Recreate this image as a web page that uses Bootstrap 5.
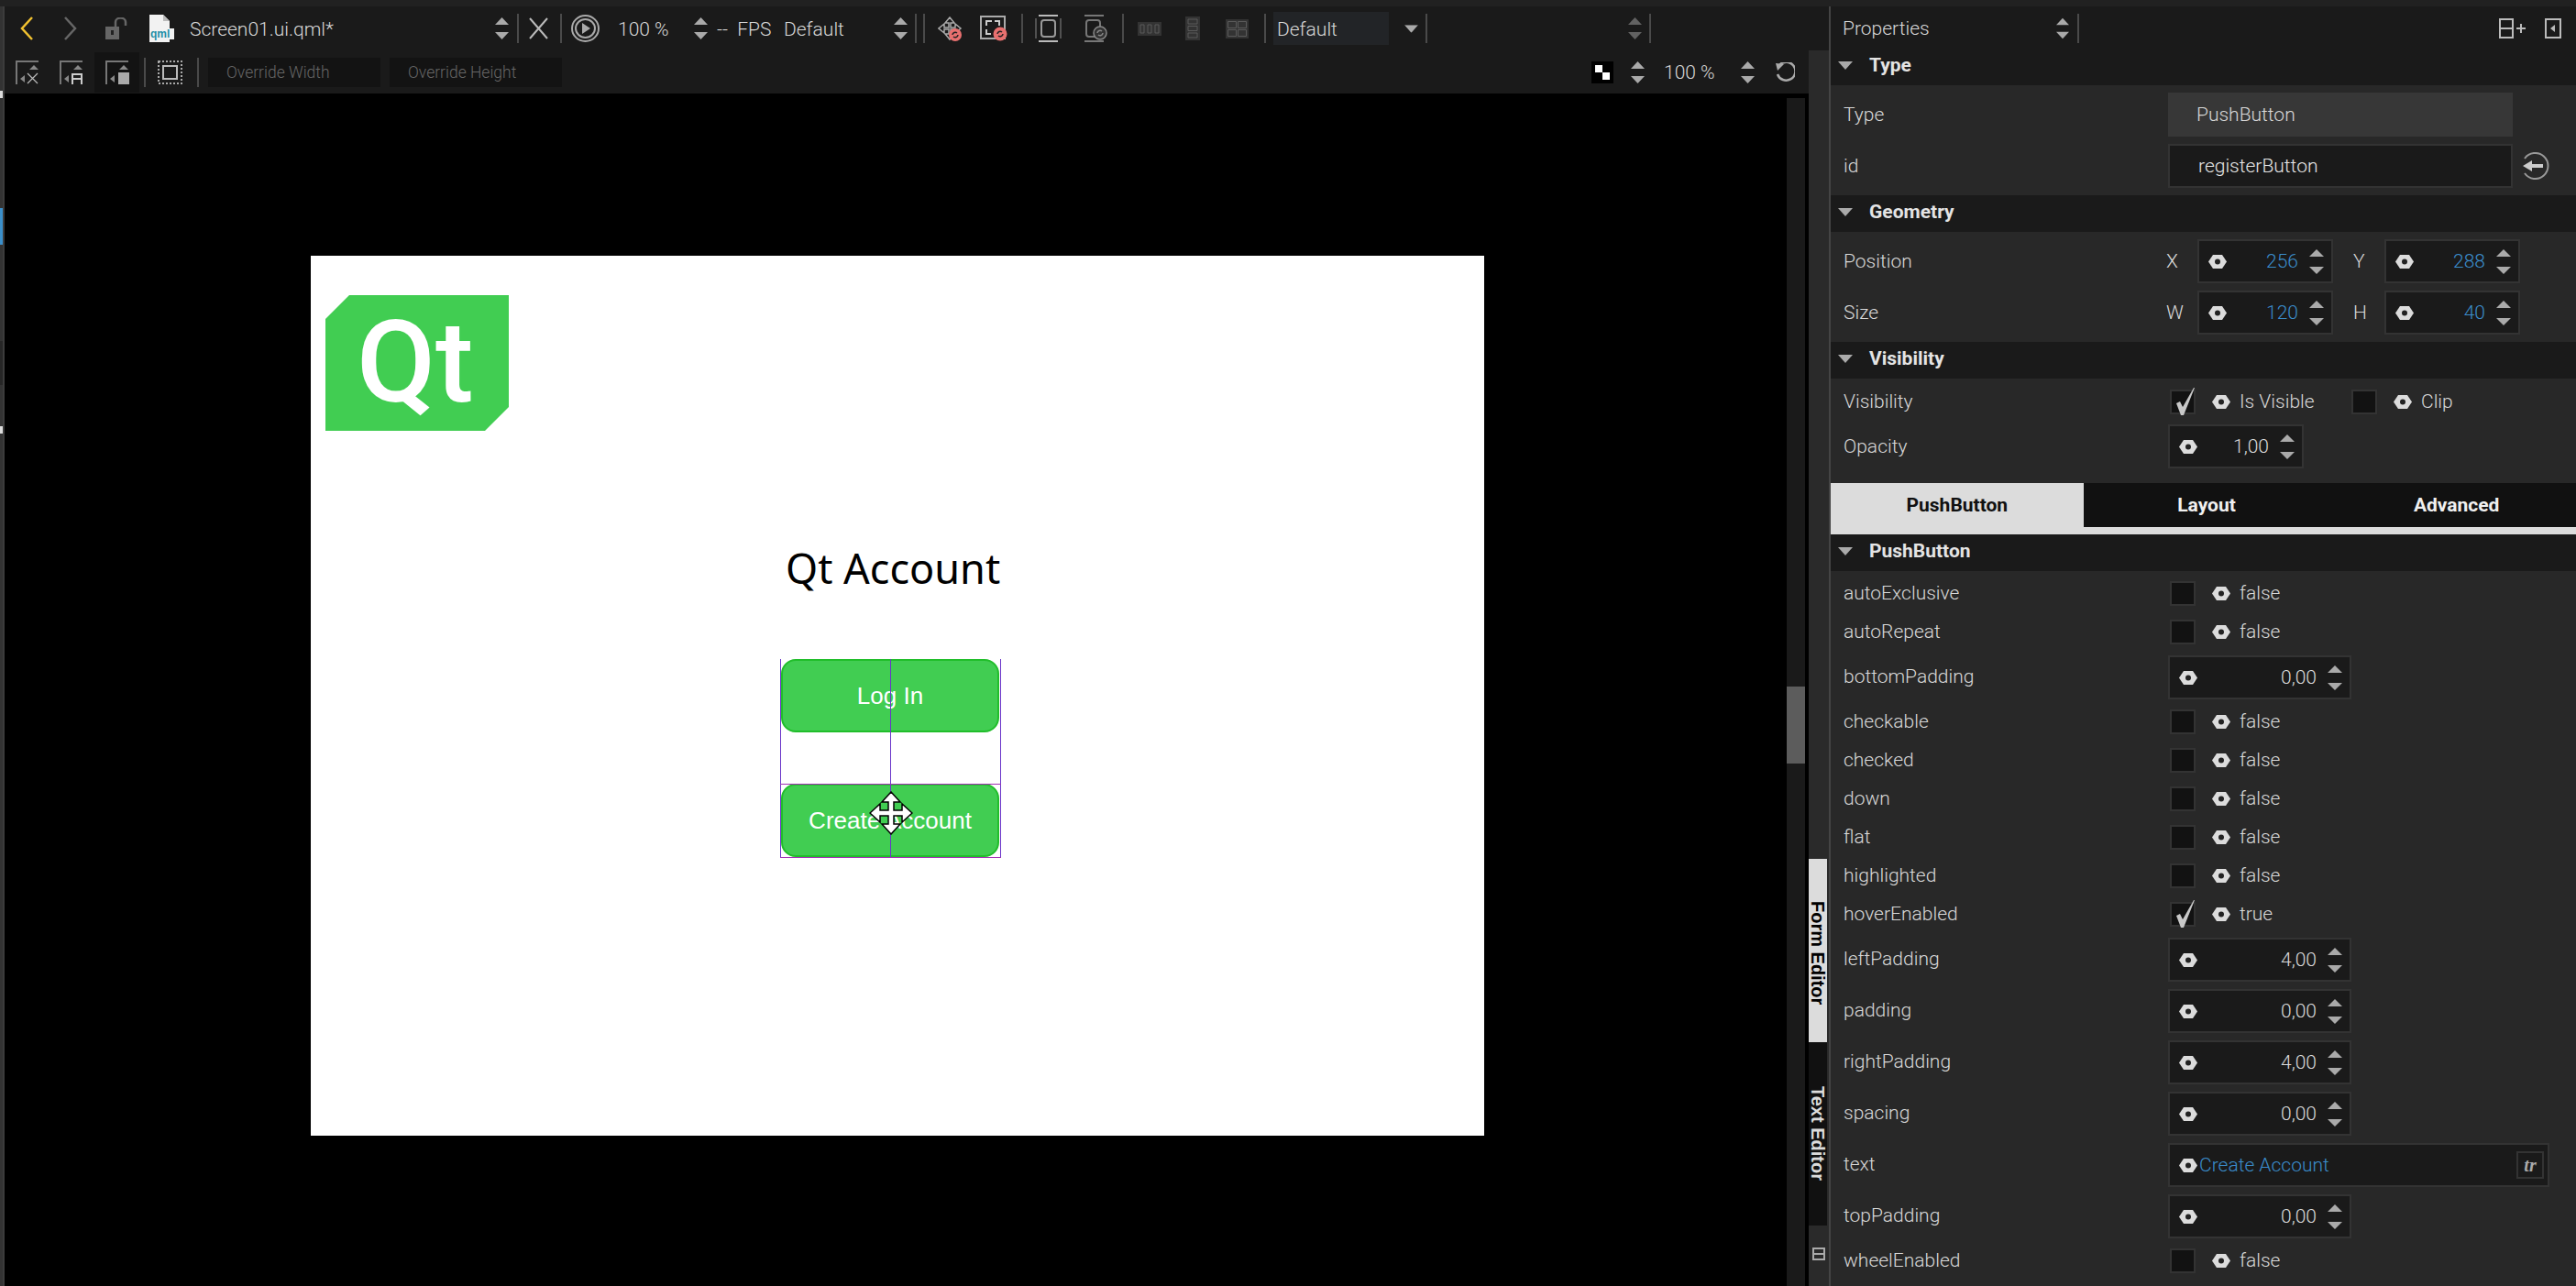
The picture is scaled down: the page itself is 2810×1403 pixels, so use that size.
<!DOCTYPE html>
<html lang="en">
<head>
  <meta charset="UTF-8" />
  <title>Qt Design Studio - Screen01.ui.qml</title>
  <link href="https://cdn.jsdelivr.net/npm/bootstrap@5.3.2/dist/css/bootstrap.min.css" rel="stylesheet" />
  <style>
    html, body { height: 1403px; overflow: hidden; }
    body {
      width: 2810px;
      background-color: #000;
      color: #d8d8d8;
      font-family: Roboto, "Liberation Sans", sans-serif;
      font-weight: 300;
      font-size: 21px;
      line-height: 1;
    }
    svg { display: block; flex: none; }
    .top-strip { height: 7px; background: #212121; }
    .shell { height: 1396px; }

    /* left rail */
    .rail { width: 5px; background: #333; border-right: 2px solid #3c3c3c; }
    .rail-mark { width: 3px; margin-left: 0; }
    .mark-a { height: 8px; margin-top: 92px; background: #dcdcdc; }
    .mark-b { height: 40px; margin-top: 120px; background: #3b8fca; }
    .mark-c { height: 48px; margin-top: 105px; background: #262626; }
    .mark-d { height: 8px; margin-top: 45px; background: #dcdcdc; }

    /* toolbars */
    .main-col { width: 1991px; }
    .tool-row { height: 48px; background: #1a1a1a; }
    .tool-row2 { height: 47px; background: #1a1a1a; }
    .tool-sep { width: 2px; height: 32px; background: #4a4a4a; flex: none; }
    .tool-sel { width: 49px; height: 44px; background: #131313; }
    .tool-input { width: 188px; height: 32px; background: #131313; color: #666; font-size: 17.5px; padding: 2px 0 0 20px; }
    .txt-file { width: 333px; padding-top: 2px; }
    .txt-zoom { width: 83px; padding-top: 2px; }
    .txt-fps { width: 73px; padding-top: 2px; word-spacing: 5px; }
    .txt-def { width: 120px; padding-top: 2px; }
    .tool-zoom { width: 73px; padding-top: 2px; }
    .combo-box { width: 126px; height: 36px; background: #222427; padding: 2px 0 0 4px; }
    .t7 { margin-left: 7px; } .t8 { margin-left: 8px; } .t9 { margin-left: 9px; }
    .t10 { margin-left: 10px; } .t11 { margin-left: 11px; } .t12 { margin-left: 12px; }
    .t13 { margin-left: 13px; } .t14 { margin-left: 14px; } .t15 { margin-left: 15px; }
    .t16 { margin-left: 16px; } .t17 { margin-left: 17px; } .t19 { margin-left: 19px; }
    .t20 { margin-left: 20px; } .t21 { margin-left: 21px; } .t22 { margin-left: 22px; }
    .t24 { margin-left: 24px; } .t26 { margin-left: 26px; } .t28 { margin-left: 28px; }
    .t31 { margin-left: 31px; } .t33 { margin-left: 33px; } .t219 { margin-left: 219px; }
    .t5 { margin-left: 5px; }
    .right-group { padding-right: 15px; }

    /* canvas */
    .stage { width: 1944px; padding: 177px 0 0 334px; }
    .scene { position: relative; width: 1280px; height: 960px; background: #fff; }
    .qt-logo {
      position: absolute; left: 16px; top: 43px; width: 200px; height: 148px;
      background: #41cd52; color: #fff; padding-left: 34px;
      clip-path: polygon(26px 0, 100% 0, 100% 122px, 174px 100%, 0 100%, 0 26px);
      font-family: Roboto, sans-serif; font-weight: 500; font-size: 125px; line-height: 148px;
      filter: blur(.5px);
    }
    .scene-title {
      position: absolute; left: 518px; top: 311px;
      color: #000; font-family: "Noto Sans", sans-serif; font-weight: 400; font-size: 45px; line-height: 60px;
      white-space: nowrap;
    }
    .scene-btn {
      position: absolute; left: 513px; width: 238px; height: 80px;
      background: #41cd52; border: 2px solid #21be2b; border-radius: 16px; color: #fff;
      font-family: "Liberation Sans", sans-serif; font-weight: 400; font-size: 26px; padding: 0;
    }
    .scene-btn:hover { background: #41cd52; border-color: #21be2b; color: #fff; }
    .btn-login { top: 440px; }
    .btn-create { top: 576px; }
    .sel-v { position: absolute; top: 440px; width: 1px; height: 217px; background: #6a35c9; }
    .sel-h { position: absolute; left: 512px; width: 241px; height: 1px; background: #a331b4; }
    .sel-l { left: 512px; } .sel-c { left: 632px; } .sel-r { left: 752px; }
    .sel-m { top: 576px; } .sel-b { top: 656px; }
    .move-cursor { position: absolute; left: 609px; top: 584px; }

    /* scrollbar and side tabs */
    .v-scroll { width: 20px; margin-top: 5px; background: #1a1a1a; padding-top: 642px; }
    .v-thumb { height: 84px; background: #5c5c5c; }
    .gap-col { width: 4px; }
    .side-tabs { width: 22px; background: #2a2a2a; }
    .side-tab {
      writing-mode: vertical-rl; font-family: "Liberation Sans", sans-serif; font-weight: 700; font-size: 20px;
      padding-top: 46px;
    }
    .tab-form { height: 200px; background: #dcdcdc; color: #000; margin-top: 882px; }
    .tab-text { height: 200px; background: #111; color: #dcdcdc; padding-top: 48px; }
    .side-foot { padding: 24px 0 0 4px; }

    /* properties panel */
    .panel { width: 815px; border-left: 2px solid #444; background: #282828; }
    .panel-head { height: 48px; background: #1a1a1a; padding-left: 13px; }
    .panel-title { width: 233px; }
    .sec-head { height: 40px; background: #1a1a1a; padding: 0 0 3px 8px; color: #e4e4e4; font-weight: 700; }
    .sec-first { height: 38px; padding-bottom: 5px; }
    .sec-name { margin-left: 18px; }
    .sec-body { padding: 4px 0; }
    .sec-vis { padding: 4px 0 12px; }
    .sec-list { padding-top: 3px; }
    .prop-row { height: 56px; padding-left: 14px; }
    .prop-check { height: 42px; }
    .prop-label { width: 354px; flex: none; }
    .xy-main { width: 352px; }
    .xy-label { width: 34px; flex: none; }
    .xy-second { width: 34px; margin-left: 22px; flex: none; }
    .field { height: 48px; border: 2px solid #333; background: #1a1a1a; flex: none; margin-top: 2px; }
    .field-type { width: 376px; background: #373737; border: 0; padding-left: 31px; margin-top: 0; }
    .field-id { width: 376px; padding-left: 31px; margin-top: 0; color: #e6e6e6; }
    .back-icon { margin-left: 9px; }
    .spin-md { width: 200px; }
    .spin-xy { margin-top: 0; width: 148px; }
    .spin-op { margin-top: 0; width: 148px; }
    .field-text { width: 416px; }
    .spin-hex { margin-left: 10px; }
    .spin-val { flex: 1; text-align: right; margin-right: 12px; color: #dcdcdc; }
    .val-blue { color: #3a8ccb; }
    .spin-arrows { margin-right: 8px; }
    .chk-box {
      width: 28px; height: 27px; margin-left: 2px; background: #121212; border: 2px solid #333; flex: none;
      position: relative;
    }
    .chk-mark { position: absolute; left: 4px; top: -4px; }
    .chk-hex { margin-left: 18px; }
    .chk-text { margin-left: 10px; white-space: nowrap; }
    .vis-first { width: 198px; }
    .text-val { color: #3a8ccb; margin-left: 2px; flex: 1; }
    .tr-btn {
      width: 30px; height: 30px; border: 2px solid #333; margin-right: 4px; color: #aaa;
      font-family: "Liberation Serif", serif; font-weight: 700; font-style: italic; font-size: 20px;
    }
    .tab-strip { height: 56px; background: #111; border-bottom: 8px solid #dcdcdc; font-weight: 700; color: #f0f0f0; }
    .tab-item { width: 269px; }
    .tab-on { width: 276px; background: #dcdcdc; color: #111; }
    .tab-last { padding-left: 8px; }
  </style>
</head>
<body>
  <svg width="0" height="0" class="position-absolute">
    <symbol id="updown" viewBox="0 0 16 27"><path d="M8 0l8 8H0zM0 19h16l-8 8z" fill="#aaa"/></symbol>
    <symbol id="updown-tool" viewBox="0 0 15 24"><path d="M7.500 0L15 8H0zM0 16h15l-7.500 8z" fill="#aaa"/></symbol>
    <symbol id="hex" viewBox="0 0 20 15"><path d="M5 0h10l5 7.500L15 15H5L0 7.500z" fill="#dcdcdc"/><circle cx="10" cy="7.500" r="3" fill="#222"/></symbol>
    <symbol id="section-tri" viewBox="0 0 16 9"><path d="M0 0h16L8 9z" fill="#aaa"/></symbol>
    <symbol id="tick" viewBox="0 0 22 30"><path d="M1 17l4-2 3 6L20 0h1L9 30H6z" fill="#c8c8c8"/></symbol>
  </svg>

  <div class="top-strip"></div>
  <div class="shell d-flex">
    <div class="rail d-flex flex-column">
      <div class="rail-mark mark-a"></div>
      <div class="rail-mark mark-b"></div>
      <div class="rail-mark mark-c"></div>
      <div class="rail-mark mark-d"></div>
    </div>

    <div class="main-col d-flex flex-column">
      <!-- toolbar 1 -->
      <div class="tool-row d-flex align-items-center">
        <svg class="t17" width="14" height="26" viewBox="0 0 14 26"><path d="M13 1L2 13l11 12" fill="none" stroke="#f2c230" stroke-width="2.500"/></svg>
        <svg class="t33" width="15" height="26" viewBox="0 0 15 26"><path d="M2 1l11 12L2 25" fill="none" stroke="#666" stroke-width="2.500"/></svg>
        <svg class="t31" width="24" height="24" viewBox="0 0 24 24"><rect x="0" y="10" width="15" height="14" fill="#666"/><path d="M11 10V5a5 4 0 0 1 11 0v4" fill="none" stroke="#666" stroke-width="2.500"/><rect x="6" y="14" width="3" height="5" fill="#222"/></svg>
        <svg class="t24" width="27" height="30" viewBox="0 0 27 30"><path d="M0 0h15l7 7v23H0z" fill="#f2f2f2"/><path d="M15 0v7h7" fill="#bbb"/><rect x="1" y="15" width="26" height="12" fill="#f2f2f2"/><text x="1" y="25" font-family="Liberation Sans" font-weight="700" font-size="12" fill="#1f8fa8">qml</text></svg>
        <div class="t17 txt-file">Screen01.ui.qml*</div>
        <svg width="15" height="24"><use href="#updown-tool"/></svg>
        <div class="tool-sep t9"></div>
        <svg class="t11" width="21" height="24" viewBox="0 0 21 24"><path d="M1 1l19 22M20 1L1 23" stroke="#bbb" stroke-width="2" fill="none"/></svg>
        <div class="tool-sep t13"></div>
        <svg class="t10" width="31" height="30" viewBox="0 0 31 30"><ellipse cx="15.500" cy="15" rx="14.500" ry="14" fill="none" stroke="#aaa" stroke-width="2"/><ellipse cx="15.500" cy="15" rx="10.500" ry="10" fill="none" stroke="#aaa" stroke-width="2"/><path d="M12 9l9 6-9 6z" fill="#aaa"/></svg>
        <div class="t20 txt-zoom">100 %</div>
        <svg width="15" height="24"><use href="#updown-tool"/></svg>
        <div class="t10 txt-fps">-- FPS</div>
        <div class="txt-def">Default</div>
        <svg width="15" height="24"><use href="#updown-tool"/></svg>
        <div class="tool-sep t8"></div>
        <div class="tool-sep t7"></div>
        <svg class="t14" width="27" height="27" viewBox="0 0 27 27"><path d="M13 1l5 6h-4v5h5V8l6 5-6 5v-4h-5v5h4l-5 6-5-6h4v-5H7v4l-6-5 6-5v4h5V7H8z" fill="none" stroke="#aaa" stroke-width="1.500"/><circle cx="19" cy="20" r="7" fill="#e8706f"/><path d="M16 20a3 3 0 0 1 5-2M22 20a3 3 0 0 1-5 2" stroke="#222" stroke-width="1.500" fill="none"/></svg>
        <svg class="t19" width="30" height="28" viewBox="0 0 30 28"><rect x="1" y="1" width="26" height="24" fill="none" stroke="#aaa" stroke-width="2"/><path d="M7 11V6h6M21 11V6h-5M7 15v5h5" stroke="#ccc" stroke-width="2" fill="none"/><circle cx="22" cy="20" r="7.500" fill="#e8706f"/><path d="M19 20a3 3 0 0 1 5-2M25 20a3 3 0 0 1-5 2" stroke="#222" stroke-width="1.500" fill="none"/></svg>
        <div class="tool-sep t15"></div>
        <svg class="t13" width="29" height="30" viewBox="0 0 29 30"><rect x="4" y="0" width="21" height="2" fill="#bbb"/><rect x="4" y="28" width="21" height="2" fill="#bbb"/><path d="M1 4v22M28 4v22" stroke="#888" stroke-width="1"/><rect x="7" y="6" width="15" height="18" rx="3" fill="none" stroke="#999" stroke-width="2"/></svg>
        <svg class="t21" width="29" height="30" viewBox="0 0 29 30"><rect x="4" y="0" width="21" height="2" fill="#777"/><rect x="4" y="28" width="21" height="2" fill="#777"/><rect x="6" y="6" width="15" height="18" rx="3" fill="none" stroke="#777" stroke-width="2"/><circle cx="21" cy="20" r="7" fill="#333" stroke="#888" stroke-width="1.500"/><path d="M18 20a3 3 0 0 1 5-2M24 20a3 3 0 0 1-5 2" stroke="#888" stroke-width="1.500" fill="none"/></svg>
        <div class="tool-sep t16"></div>
        <svg class="t15" width="26" height="15" viewBox="0 0 26 15"><rect width="26" height="15" fill="#333"/><path d="M3 3h4v9H3zM11 3h4v9h-4zM19 3h4v9h-4z" fill="none" stroke="#5a5a5a"/></svg>
        <svg class="t26" width="16" height="26" viewBox="0 0 16 26"><rect width="16" height="26" fill="#333"/><path d="M3 3h10v5H3zM3 10.500h10v5H3zM3 18h10v5H3z" fill="none" stroke="#5a5a5a"/></svg>
        <svg class="t28" width="25" height="21" viewBox="0 0 25 21"><rect width="25" height="21" fill="#333"/><path d="M2.500 2.500h9v7h-9zM13.500 2.500h9v7h-9zM2.500 11.500h9v7h-9zM13.500 11.500h9v7h-9z" fill="none" stroke="#5a5a5a"/></svg>
        <div class="tool-sep t17"></div>
        <div class="combo-box t8 d-flex align-items-center">Default</div>
        <svg class="t17" width="15" height="9" viewBox="0 0 16 9"><use href="#section-tri"/></svg>
        <div class="tool-sep t8"></div>
        <svg class="t219 opacity-50" width="15" height="24"><use href="#updown-tool"/></svg>
        <div class="tool-sep t8"></div>
      </div>

      <div class="d-flex flex-grow-1">
        <div class="d-flex flex-column flex-grow-1">
          <!-- toolbar 2 -->
          <div class="tool-row2 d-flex align-items-center">
            <svg class="t12" width="26" height="26" viewBox="0 0 26 26"><path d="M1 26V1h24" fill="none" stroke="#777" stroke-width="2"/><path d="M20 5l5 5H15zM5 20l5-4v8z" fill="#888"/><path d="M13 14l11 11M24 14L13 25" stroke="#bbb" stroke-width="1.200"/></svg>
            <svg class="t22" width="26" height="26" viewBox="0 0 26 26"><path d="M1 26V1h24" fill="none" stroke="#777" stroke-width="2"/><path d="M20 5l5 5H15zM5 20l5-4v8z" fill="#888"/><path d="M14 26V15h10v11M14 20h10" stroke="#ccc" stroke-width="2" fill="none"/></svg>
            <div class="tool-sel t12 d-flex align-items-center justify-content-center">
              <svg width="26" height="26" viewBox="0 0 26 26"><path d="M1 26V1h24" fill="none" stroke="#777" stroke-width="2"/><path d="M20 5l5 5H15zM5 20l5-4v8z" fill="#888"/><rect x="14" y="13" width="12" height="13" fill="#aaa"/></svg>
            </div>
            <div class="tool-sep t5"></div>
            <svg class="t13" width="27" height="26" viewBox="0 0 27 26"><rect x="1" y="1" width="25" height="24" fill="none" stroke="#aaa" stroke-width="2" stroke-dasharray="2 2"/><rect x="6" y="6" width="15" height="14" fill="none" stroke="#bbb" stroke-width="2"/></svg>
            <div class="tool-sep t16"></div>
            <div class="tool-input t10 d-flex align-items-center">Override Width</div>
            <div class="tool-input t10 d-flex align-items-center">Override Height</div>
            <div class="right-group ms-auto d-flex align-items-center">
              <svg width="24" height="24" viewBox="0 0 24 24"><rect width="24" height="24" fill="#000"/><rect x="4" y="4" width="8" height="8" fill="#fff"/><rect x="12" y="12" width="8" height="8" fill="#fff"/></svg>
              <svg class="t19" width="15" height="24"><use href="#updown-tool"/></svg>
              <div class="t21 tool-zoom">100 %</div>
              <svg class="t11" width="15" height="24"><use href="#updown-tool"/></svg>
              <svg class="t22" width="22" height="22" viewBox="0 0 22 22"><path d="M4 4a10 10 0 1 1-2 10" transform="translate(1 -1)" fill="none" stroke="#aaa" stroke-width="2.500" /><path d="M1 1l9 1-7 7z" fill="#aaa"/></svg>
            </div>
          </div>

          <div class="d-flex flex-grow-1">
            <!-- form canvas -->
            <div class="stage">
              <div class="scene">
                <div class="qt-logo">Qt</div>
                <div class="scene-title">Qt Account</div>
                <button class="btn scene-btn btn-login">Log In</button>
                <button class="btn scene-btn btn-create">Create Account</button>
                <div class="sel-v sel-l"></div>
                <div class="sel-v sel-c"></div>
                <div class="sel-v sel-r"></div>
                <div class="sel-h sel-m"></div>
                <div class="sel-h sel-b"></div>
                <svg class="move-cursor" width="48" height="48" viewBox="0 0 48 48"><path d="M24 1l10 11h-7v9h9v-7l11 10-11 10v-7h-9v9h7L24 47 14 36h7v-9h-9v7L1 24l11-10v7h9v-9h-7z" fill="#fff" stroke="#000" stroke-width="1.500"/></svg>
              </div>
            </div>
            <div class="v-scroll"><div class="v-thumb"></div></div>
            <div class="gap-col"></div>
          </div>
        </div>

        <div class="side-tabs">
          <div class="side-tab tab-form">Form Editor</div>
          <div class="side-tab tab-text">Text Editor</div>
          <div class="side-foot">
            <svg width="14" height="14" viewBox="0 0 14 14"><rect x="1" y="1" width="12" height="12" fill="none" stroke="#aaa" stroke-width="2"/><path d="M1 7h12" stroke="#aaa" stroke-width="2"/></svg>
          </div>
        </div>
      </div>
    </div>

    <!-- properties -->
    <div class="panel">
      <div class="panel-head d-flex align-items-center">
        <div class="panel-title">Properties</div>
        <svg width="14" height="24"><use href="#updown-tool"/></svg>
        <div class="tool-sep t9"></div>
        <svg class="ms-auto" width="30" height="22" viewBox="0 0 30 22"><path d="M1 1h14v20H1zM1 11h14" fill="none" stroke="#bbb" stroke-width="2"/><path d="M19 11h10M24 6v10" stroke="#bbb" stroke-width="2"/></svg>
        <svg class="t20 me-3" width="18" height="22" viewBox="0 0 18 22"><rect x="1" y="1" width="16" height="20" fill="none" stroke="#bbb" stroke-width="2"/><path d="M11 7v8l-5-4z" fill="#bbb"/></svg>
      </div>

      <div class="sec-head sec-first d-flex align-items-center"><svg width="16" height="9"><use href="#section-tri"/></svg><span class="sec-name">Type</span></div>
      <div class="sec-body">
        <div class="prop-row d-flex align-items-center">
          <div class="prop-label">Type</div>
          <div class="field field-type d-flex align-items-center">PushButton</div>
        </div>
        <div class="prop-row d-flex align-items-center">
          <div class="prop-label">id</div>
          <div class="field field-id d-flex align-items-center">registerButton</div>
          <svg class="back-icon" width="31" height="30" viewBox="0 0 31 30"><path d="M4 7a14 14 0 1 1 0 16" fill="none" stroke="#999" stroke-width="2"/><path d="M2 15l10-6v4h12v4H12v4z" fill="#ccc"/></svg>
        </div>
      </div>

      <div class="sec-head d-flex align-items-center"><svg width="16" height="9"><use href="#section-tri"/></svg><span class="sec-name">Geometry</span></div>
      <div class="sec-body" id="geometry"></div>

      <div class="sec-head d-flex align-items-center"><svg width="16" height="9"><use href="#section-tri"/></svg><span class="sec-name">Visibility</span></div>
      <div class="sec-vis">
        <div class="prop-row prop-check d-flex align-items-center">
          <div class="prop-label">Visibility</div>
          <div class="vis-first d-flex align-items-center" id="visA"></div>
          <div class="d-flex align-items-center" id="visB"></div>
        </div>
        <div class="prop-row d-flex align-items-center">
          <div class="prop-label">Opacity</div>
          <div id="opacity"></div>
        </div>
      </div>

      <div class="tab-strip d-flex text-center">
        <div class="tab-item tab-on d-flex align-items-center justify-content-center">PushButton</div>
        <div class="tab-item d-flex align-items-center justify-content-center">Layout</div>
        <div class="tab-item tab-last d-flex align-items-center justify-content-center">Advanced</div>
      </div>

      <div class="sec-head d-flex align-items-center"><svg width="16" height="9"><use href="#section-tri"/></svg><span class="sec-name">PushButton</span></div>
      <div class="sec-list" id="props"></div>
    </div>
  </div>

  <script>
    const hexIcon = cls => `<svg class="${cls}" width="20" height="15"><use href="#hex"/></svg>`;
    const arrows = `<svg class="spin-arrows" width="16" height="27"><use href="#updown"/></svg>`;

    function spin(value, cls, blue) {
      return `<div class="field ${cls} d-flex align-items-center">${hexIcon('spin-hex')}
        <div class="spin-val ${blue ? 'val-blue' : ''}">${value}</div>${arrows}</div>`;
    }

    function check(on, text) {
      return `<div class="chk-box">${on ? '<svg class="chk-mark" width="22" height="30"><use href="#tick"/></svg>' : ''}</div>
        ${hexIcon('chk-hex')}<div class="chk-text">${text}</div>`;
    }

    function xyRow(label, a, av, b, bv) {
      return `<div class="prop-row d-flex align-items-center">
        <div class="prop-label xy-main">${label}</div>
        <div class="xy-label">${a}</div>${spin(av, 'spin-xy', true)}
        <div class="xy-second">${b}</div>${spin(bv, 'spin-xy', true)}
      </div>`;
    }

    document.getElementById('geometry').innerHTML =
      xyRow('Position', 'X', 256, 'Y', 288) + xyRow('Size', 'W', 120, 'H', 40);
    document.getElementById('visA').innerHTML = check(true, 'Is Visible');
    document.getElementById('visB').innerHTML = check(false, 'Clip');
    document.getElementById('opacity').innerHTML = spin('1,00', 'spin-op', false);

    const props = [
      ['autoExclusive', 'b', false], ['autoRepeat', 'b', false], ['bottomPadding', 'n', '0,00'],
      ['checkable', 'b', false], ['checked', 'b', false], ['down', 'b', false], ['flat', 'b', false],
      ['highlighted', 'b', false], ['hoverEnabled', 'b', true], ['leftPadding', 'n', '4,00'],
      ['padding', 'n', '0,00'], ['rightPadding', 'n', '4,00'], ['spacing', 'n', '0,00'],
      ['text', 't', 'Create Account'], ['topPadding', 'n', '0,00'], ['wheelEnabled', 'b', false]
    ];

    document.getElementById('props').innerHTML = props.map(([name, kind, value]) => {
      if (kind === 'b') {
        return `<div class="prop-row prop-check d-flex align-items-center"><div class="prop-label">${name}</div>${check(value, value)}</div>`;
      }
      if (kind === 'n') {
        return `<div class="prop-row d-flex align-items-center"><div class="prop-label">${name}</div>${spin(value, 'spin-md', false)}</div>`;
      }
      return `<div class="prop-row d-flex align-items-center"><div class="prop-label">${name}</div>
        <div class="field field-text d-flex align-items-center">${hexIcon('spin-hex')}<div class="text-val">${value}</div><div class="tr-btn d-flex align-items-center justify-content-center">tr</div></div></div>`;
    }).join('');
  </script>
  <script src="https://cdn.jsdelivr.net/npm/bootstrap@5.3.2/dist/js/bootstrap.bundle.min.js"></script>
</body>
</html>
